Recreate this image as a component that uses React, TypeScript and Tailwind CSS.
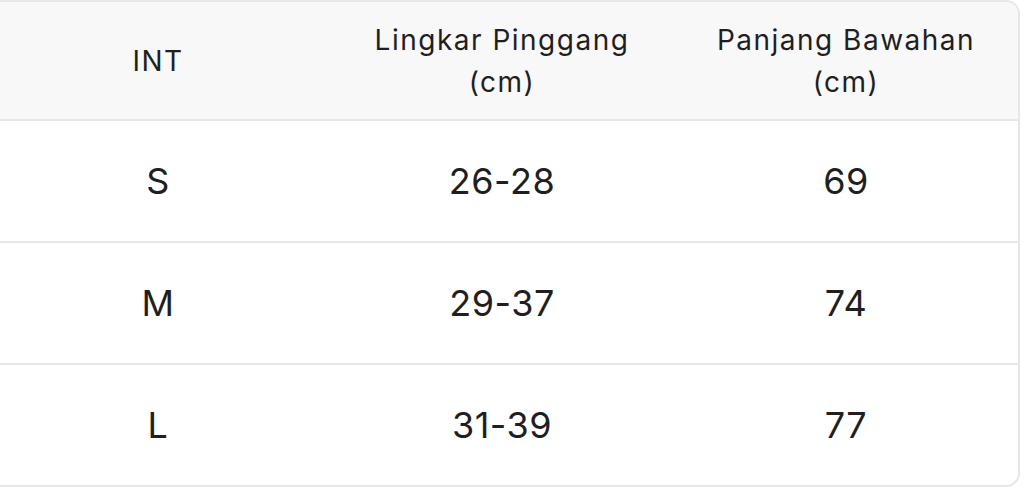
const rows = [
  { size: "S", waist: "26-28", length: "69" },
  { size: "M", waist: "29-37", length: "74" },
  { size: "L", waist: "31-39", length: "77" },
];

export default function App() {
  return (
    <div className="h-[491px] w-[1028px] overflow-hidden bg-white font-['Inter',sans-serif] text-[#1f1f1f]">
      <div className="ml-[-16px] w-[1036px] overflow-hidden rounded-[14px] border-2 border-[#e7e7e7]">
        <div className="grid h-[117px] grid-cols-3 items-center bg-[#f8f8f8] text-center text-[28px] leading-[42px] tracking-[1.5px]">
          <div>INT</div>
          <div>
            Lingkar Pinggang
            <br />
            (cm)
          </div>
          <div>
            Panjang Bawahan
            <br />
            (cm)
          </div>
        </div>
        {rows.map((row) => (
          <div
            key={row.size}
            className="grid h-[122px] grid-cols-3 items-center border-t-2 border-[#e7e7e7] text-center text-[36px] tracking-[0.5px]"
          >
            <div>{row.size}</div>
            <div>{row.waist}</div>
            <div>{row.length}</div>
          </div>
        ))}
      </div>
    </div>
  );
}
